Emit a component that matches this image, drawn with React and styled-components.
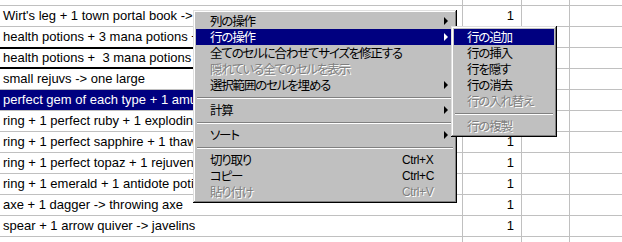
import React from 'react';
import styled, { createGlobalStyle } from 'styled-components';

const GlobalStyle = createGlobalStyle`
  html, body {
    margin: 0;
    padding: 0;
    background: #fff;
  }
  body {
    width: 622px;
    height: 242px;
    overflow: hidden;
  }
`;

// シート本体
const Sheet = styled.div`
  position: relative;
  width: 622px;
  height: 242px;
  overflow: hidden;
  background: #fff;
  font-family: "Liberation Sans", Arial, sans-serif;
`;

const Grid = styled.div`
  display: grid;
  grid-template-columns: 463px 59px 48px 1fr;
  grid-auto-rows: 21px;
  grid-template-rows: 6px;
`;

const Cell = styled.div`
  box-sizing: border-box;
  border-bottom: 1px solid #c0c0c0;
  border-right: ${({ $noRight }) => ($noRight ? 'none' : '1px solid #c0c0c0')};
  font-size: 13px;
  line-height: 20px;
  white-space: pre;
  overflow: hidden;
  color: #000;
  padding: ${({ $num }) => ($num ? '0 7px 0 0' : '0 0 0 3px')};
  text-align: ${({ $num }) => ($num ? 'right' : 'left')};
`;

const TextCell = styled(Cell)`
  border-right: 1px solid #c0c0c0;
  background: ${({ $selected }) => ($selected ? '#000080' : '#fff')};
  color: ${({ $selected }) => ($selected ? '#fff' : '#000')};
  border-top: ${({ $active }) => ($active ? '2px solid #000' : 'none')};
  border-bottom: ${({ $active }) => ($active ? '2px solid #000' : '1px solid #c0c0c0')};
  line-height: ${({ $active }) => ($active ? '17px' : '20px')};
  margin-top: ${({ $active }) => ($active ? '-1px' : '0')};
  height: ${({ $active }) => ($active ? '22px' : 'auto')};
`;

// コンテキストメニュー
const Menu = styled.div`
  position: absolute;
  left: ${({ $left }) => $left}px;
  top: ${({ $top }) => $top}px;
  width: ${({ $width }) => $width}px;
  box-sizing: border-box;
  padding: 3px;
  background: #c0c0c0;
  box-shadow:
    inset -1px -1px 0 #000,
    inset 1px 1px 0 #dfdfdf,
    inset -2px -2px 0 #808080,
    inset 2px 2px 0 #fff;
  display: flex;
  flex-direction: column;
  font-family: "Noto Sans CJK JP", "Liberation Sans", sans-serif;
  z-index: ${({ $z }) => $z};
`;

const Item = styled.div`
  height: 16px;
  display: flex;
  align-items: center;
  padding: 0 4px 0 ${({ $pad }) => $pad}px;
  background: ${({ $active }) => ($active ? '#000080' : 'transparent')};
  color: ${({ $active, $disabled }) => ($active ? '#fff' : $disabled ? '#808080' : '#000')};
  text-shadow: ${({ $disabled }) => ($disabled ? '1px 1px 0 #fff' : 'none')};
  font-size: 12.5px;
  letter-spacing: -1.2px;
  font-feature-settings: "palt";
  white-space: nowrap;
`;

const Label = styled.span`
  flex: 1;
  line-height: 16px;
`;

const Shortcut = styled.span`
  font-family: "Liberation Sans", Arial, sans-serif;
  font-size: 12px;
  letter-spacing: -0.4px;
  margin-right: 12px;
  width: 36px;
`;

const Arrow = styled.span`
  width: 0;
  height: 0;
  margin-right: 2px;
  border-left: 4px solid ${({ $active }) => ($active ? '#fff' : '#000')};
  border-top: 4px solid transparent;
  border-bottom: 4px solid transparent;
`;

const Separator = styled.div`
  height: 9px;
  display: flex;
  flex-direction: column;
  justify-content: center;
  padding: 0 1px;

  &::before {
    content: '';
    display: block;
    border-top: 1px solid #808080;
    border-bottom: 1px solid #fff;
  }
`;

const rows = [
  "Wirt's leg + 1 town portal book -> cow level",
  'health potions + 3 mana potions + 1 chipped gem -> full rejuv',
  'health potions +  3 mana potions -> rejuvenation potion',
  'small rejuvs -> one large',
  'perfect gem of each type + 1 amulet -> prismatic amulet',
  'ring + 1 perfect ruby + 1 exploding potion -> garnet ring',
  'ring + 1 perfect sapphire + 1 thawing potion -> cobalt ring',
  'ring + 1 perfect topaz + 1 rejuvenation potion -> coral ring',
  'ring + 1 emerald + 1 antidote potion -> jade ring',
  'axe + 1 dagger -> throwing axe',
  'spear + 1 arrow quiver -> javelins',
];

const mainMenu = [
  { label: '列の操作', sub: true },
  { label: '行の操作', sub: true, active: true },
  { label: '全てのセルに合わせてサイズを修正する' },
  { label: '隠れている全てのセルを表示', disabled: true },
  { label: '選択範囲のセルを埋める', sub: true },
  { sep: true },
  { label: '計算', sub: true },
  { sep: true },
  { label: 'ソート', sub: true },
  { sep: true },
  { label: '切り取り', key: 'Ctrl+X' },
  { label: 'コピー', key: 'Ctrl+C' },
  { label: '貼り付け', key: 'Ctrl+V', disabled: true },
];

const rowMenu = [
  { label: '行の追加', active: true },
  { label: '行の挿入' },
  { label: '行を隠す' },
  { label: '行の消去' },
  { label: '行の入れ替え', disabled: true },
  { sep: true },
  { label: '行の複製', disabled: true },
];

const MenuList = ({ items, pad, ...rest }) => (
  <Menu {...rest}>
    {items.map((it, i) =>
      it.sep ? (
        <Separator key={i} />
      ) : (
        <Item key={i} $pad={pad} $active={it.active} $disabled={it.disabled}>
          <Label>{it.label}</Label>
          {it.key && <Shortcut>{it.key}</Shortcut>}
          {it.sub && <Arrow $active={it.active} />}
        </Item>
      )
    )}
  </Menu>
);

const App = () => {
  return (
    <Sheet>
      <GlobalStyle />
      <Grid>
        <Cell />
        <Cell />
        <Cell />
        <Cell $noRight />
        {rows.map((text, i) => (
          <React.Fragment key={i}>
            <TextCell $selected={i === 4} $active={i === 2}>{text}</TextCell>
            <Cell $num>1</Cell>
            <Cell />
            <Cell $noRight />
          </React.Fragment>
        ))}
        <Cell />
        <Cell />
        <Cell />
        <Cell $noRight />
      </Grid>
      <MenuList items={mainMenu} pad={14} $left={193} $top={10} $width={264} $z={2} />
      <MenuList items={rowMenu} pad={13} $left={451} $top={26} $width={106} $z={3} />
    </Sheet>
  );
};

export default App;
